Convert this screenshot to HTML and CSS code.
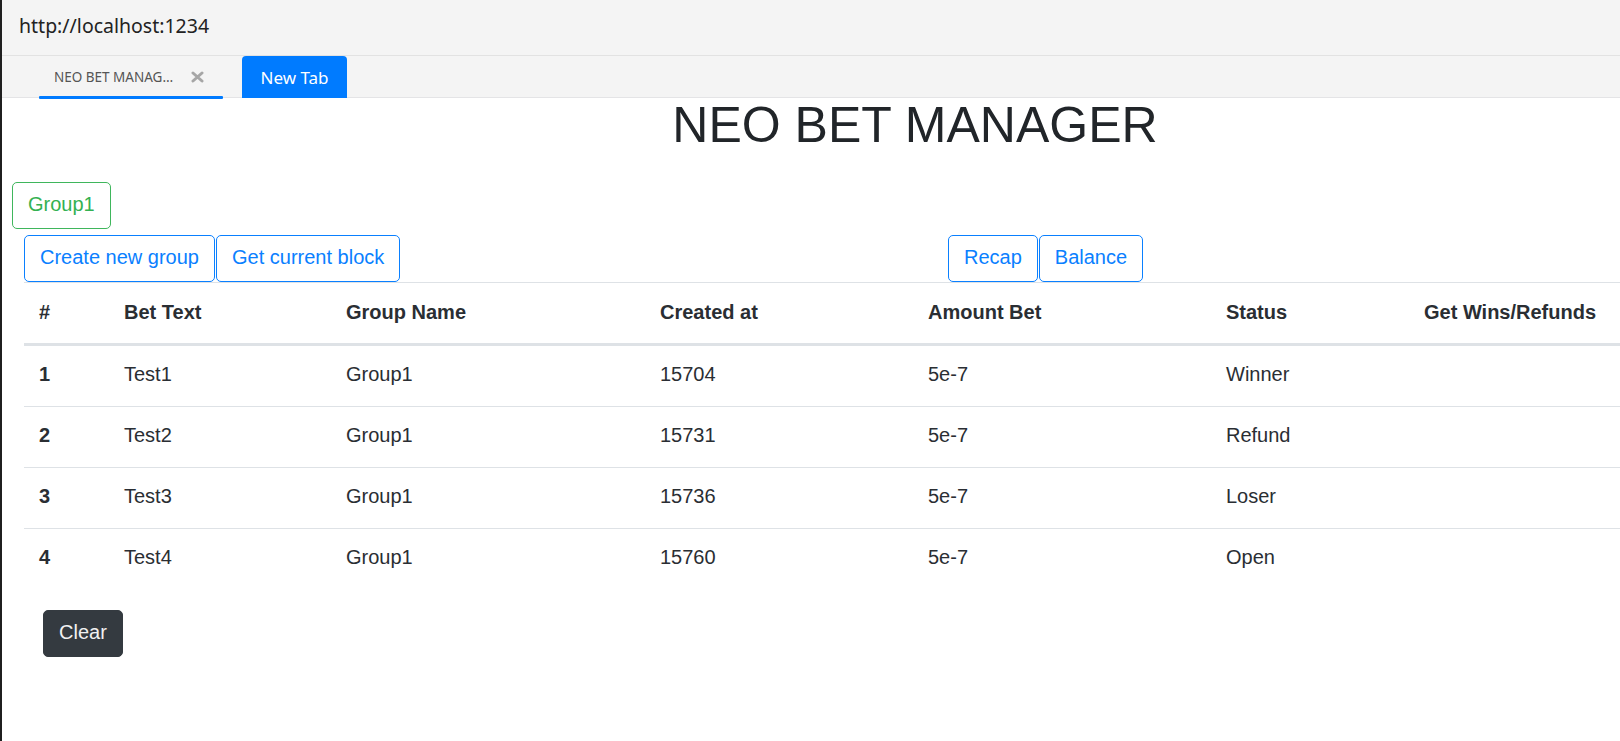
FILE: index.html
```html
<!DOCTYPE html>
<html lang="en">
<head>
<meta charset="utf-8">
<title>NEO BET MANAGER</title>
<link rel="stylesheet" href="styles.css">
</head>
<body>
<div class="frame">
  <header class="address-bar">http://localhost:1234</header>
  <nav class="tab-bar">
    <div class="tab active">
      <span class="tab-label">NEO BET MANAG…</span>
      <svg class="tab-close" width="13" height="12" viewBox="0 0 13 12" aria-hidden="true">
        <path d="M2 2 L11 10 M11 2 L2 10" stroke="#a6a6a6" stroke-width="3" stroke-linecap="round"/>
      </svg>
    </div>
    <button class="new-tab">New Tab</button>
  </nav>
  <main class="page">
    <h1 class="title">NEO BET MANAGER</h1>
    <div class="groups">
      <button class="btn btn-outline-success">Group1</button>
    </div>
    <div class="toolbar">
      <div class="btn-group">
        <button class="btn btn-outline-primary">Create new group</button>
        <button class="btn btn-outline-primary">Get current block</button>
      </div>
      <div class="btn-group">
        <button class="btn btn-outline-primary">Recap</button>
        <button class="btn btn-outline-primary">Balance</button>
      </div>
    </div>
    <table class="bets">
      <colgroup>
        <col class="c-num"><col class="c-text"><col class="c-group"><col class="c-created"><col class="c-amount"><col class="c-status"><col class="c-wins">
      </colgroup>
      <thead>
        <tr><th>#</th><th>Bet Text</th><th>Group Name</th><th>Created at</th><th>Amount Bet</th><th>Status</th><th>Get Wins/Refunds</th></tr>
      </thead>
      <tbody>
        <tr><th>1</th><td>Test1</td><td>Group1</td><td>15704</td><td>5e-7</td><td>Winner</td><td></td></tr>
        <tr><th>2</th><td>Test2</td><td>Group1</td><td>15731</td><td>5e-7</td><td>Refund</td><td></td></tr>
        <tr><th>3</th><td>Test3</td><td>Group1</td><td>15736</td><td>5e-7</td><td>Loser</td><td></td></tr>
        <tr><th>4</th><td>Test4</td><td>Group1</td><td>15760</td><td>5e-7</td><td>Open</td><td></td></tr>
      </tbody>
    </table>
    <div class="footer-actions">
      <button class="btn btn-dark">Clear</button>
    </div>
  </main>
</div>
</body>
</html>
```
FILE: styles.css
```css
html, body {
  margin: 0;
  padding: 0;
  overflow: hidden;
  background: #ffffff;
}

.frame {
  border-left: 2px solid #1f1f1f;
  min-height: 741px;
  box-sizing: border-box;
}

.address-bar {
  height: 56px;
  box-sizing: border-box;
  padding: 12px 0 0 17px;
  background: #f4f4f4;
  border-bottom: 1px solid #e2e2e2;
  font-family: "Noto Sans", sans-serif;
  font-size: 19.5px;
  line-height: normal;
  color: #222222;
}

.tab-bar {
  display: flex;
  align-items: stretch;
  height: 41px;
  background: #f4f4f4;
  border-bottom: 1px solid #e4e4e6;
  padding-left: 37px;
}

.tab {
  position: relative;
  display: flex;
  align-items: center;
  width: 184px;
  box-sizing: border-box;
  padding-left: 15px;
  font-family: "Noto Sans", sans-serif;
  font-size: 13.5px;
  color: #555555;
}

.tab.active::after {
  content: "";
  position: absolute;
  left: 0;
  right: 0;
  bottom: -2px;
  height: 3px;
  background: #007bff;
  border-radius: 1px;
}

.tab-label {
  white-space: nowrap;
  padding-top: 1px;
}

.tab-close {
  margin-left: 18px;
  margin-top: 1px;
}

.new-tab {
  margin-left: 19px;
  width: 105px;
  height: 42px;
  border: 0;
  border-radius: 4px 4px 0 0;
  background: #007bff;
  color: #ffffff;
  font-family: "Noto Sans", sans-serif;
  font-size: 17px;
  padding: 0;
}

.page {
  width: 1826px;
  font-family: "Liberation Sans", Arial, sans-serif;
  color: #212529;
}

.title {
  margin: 0;
  text-align: center;
  font-size: 50px;
  font-weight: 400;
  line-height: 55px;
}

.groups {
  margin-top: 29px;
  padding-left: 10px;
}

.btn {
  font-family: "Liberation Sans", Arial, sans-serif;
  font-size: 20px;
  line-height: 30px;
  padding: 6px 15px 9px;
  border-radius: 5px;
  border: 1px solid transparent;
  background: transparent;
  margin: 0;
  cursor: pointer;
}

.btn-outline-success {
  color: #34b152;
  border-color: #3fb65c;
}

.btn-outline-primary {
  color: #0a80ff;
  border-color: #0a80ff;
}

.btn-dark {
  background: #343a40;
  border-color: #343a40;
  color: #f1f1f1;
}

.toolbar {
  display: grid;
  grid-template-columns: 924px auto;
  margin-top: 6px;
  padding-left: 22px;
}

.btn-group {
  display: flex;
  gap: 1px;
}

.bets {
  margin-left: 22px;
  width: 1790px;
  border-collapse: collapse;
  table-layout: fixed;
  font-size: 20px;
  line-height: 30px;
  color: #2a2e33;
}

.c-num { width: 85px; }
.c-text { width: 222px; }
.c-group { width: 314px; }
.c-created { width: 268px; }
.c-amount { width: 298px; }
.c-status { width: 198px; }

.bets th,
.bets td {
  padding: 13px 15px 17px;
  text-align: left;
  vertical-align: top;
}

.bets thead th {
  padding: 14px 15px 16px;
  font-weight: 700;
  border-top: 1px solid #dee2e6;
  border-bottom: 3px solid #dee2e6;
}

.bets tbody th {
  font-weight: 700;
}

.bets tbody tr + tr th,
.bets tbody tr + tr td {
  border-top: 1px solid #dee2e6;
}

.footer-actions {
  margin-top: 21px;
  padding-left: 41px;
}
```
